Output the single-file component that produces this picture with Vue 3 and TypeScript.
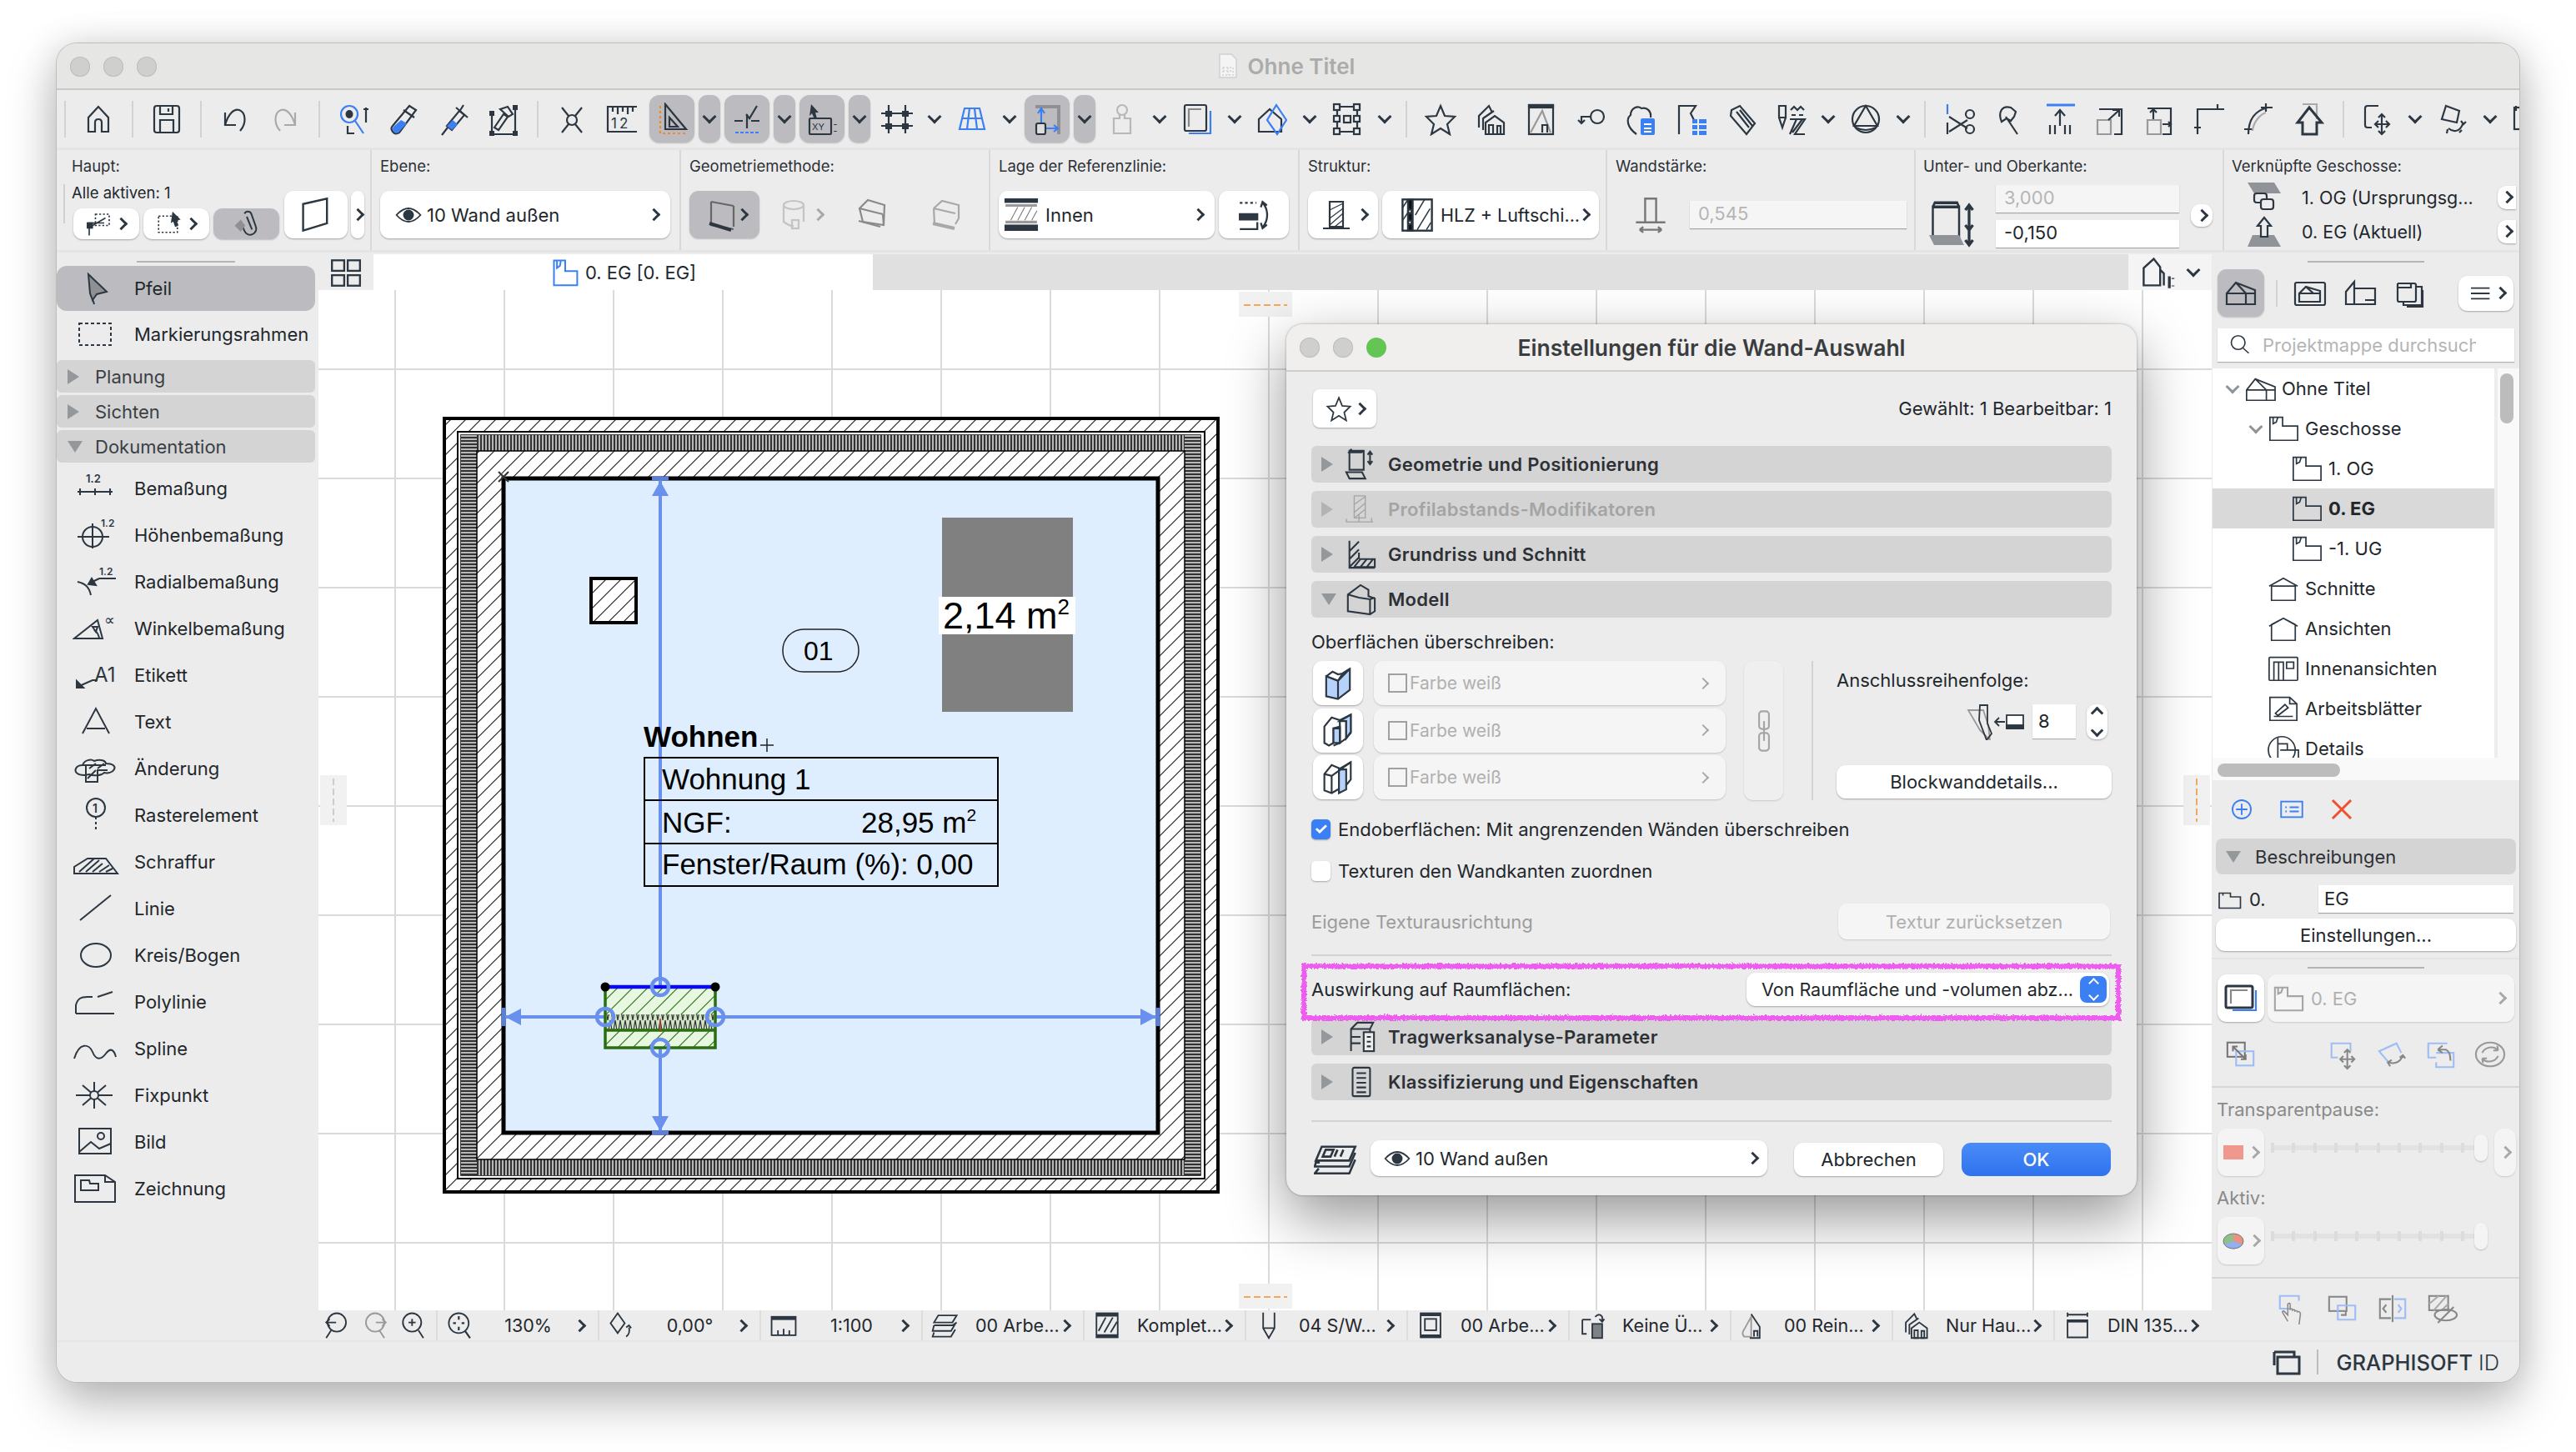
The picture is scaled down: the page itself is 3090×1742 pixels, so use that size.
<script setup lang="ts">
/**
 * ARCHICAD Hauptfenster mit Dialog "Einstellungen für die Wand-Auswahl"
 */
const B = '#3b7ff5'
const T = 'stroke="none" fill="#2c3742" font-family="Inter"'

const I: Record<string, string> = {
  home: '<path d="M20 5 8 18v17h8V24q0-4 4-4t4 4v11h8V18z"/>',
  floppy: '<rect x="5" y="4" width="30" height="32" rx="3"/><path d="M12 4v10h15V4M12 36V21h16v15M22 7v4"/>',
  undo: '<path d="M8 12v15h13"/><path d="M8 27C12 13 19 7 25 9c8 3 9 16 1 25"/>',
  redo: '<path stroke="#aaa" d="M32 12v15H19"/><path stroke="#aaa" d="M32 27C28 13 21 7 15 9c-8 3-9 16-1 25"/>',
  find: `<circle cx="15" cy="14" r="10" stroke="${B}"/><path d="M22 22l10 15" stroke="${B}"/><ellipse cx="15" cy="14" rx="4.5" ry="5" fill="#2c3742" stroke="none"/><path d="M35 6v18M32 8h6M13 28v9h8"/>`,
  dropper: `<path d="M27 4l8 5L15 36q-5 3-8-1t0-7z"/><path d="M17 21l7 4-10 11q-4 2-6-1t0-6z" fill="${B}" stroke="none"/><path d="M20 9l13 9"/>`,
  syringe: `<path d="M27 10l6 5-15 18-6-5z"/><path d="M19 21l6 5-7 7-6-5z" fill="${B}" stroke="none"/><path d="M6 39l7-9M23 6l14 12M32 3l-5 8"/>`,
  hammer: '<path d="M6 38h26M34 6v28M6 14v20"/><g fill="#2c3742" stroke="none"><rect x="3" y="34" width="6" height="6"/><rect x="31" y="34" width="6" height="6"/><rect x="31" y="3" width="6" height="6"/><rect x="3" y="10" width="6" height="6"/></g><path d="M9 30 20 14l5 3-11 16zM16 8l9-3 6 9-5 3z"/>',
  cross: '<path d="M8 6l24 30M32 6 8 36"/><circle cx="20" cy="21" r="6" fill="#ececec"/>',
  ruler: `<path d="M38 5H3v30h35M9 5v6M15 5v9M21 5v6M27 5v9M33 5v6"/><text x="7" y="31" font-size="17" letter-spacing="3" ${T}>12</text>`,
  tri: '<path d="M12 2l25 30H12z"/><path d="M17 18l10 11H17z"/><path d="M6 4v33h31" stroke="#f08a24" stroke-dasharray="3 3"/>',
  snap: `<path d="M5 22h10M25 22h10M20 14v17M19 14l4 5 9-15M9 16"/><path d="M6 36h28" stroke="${B}" stroke-dasharray="4 2"/>`,
  xy: `<path d="M7 2l9 10h-4l2 7-3 1-3-7-3 3z" fill="#2c3742" stroke="none"/><rect x="5" y="19" width="26" height="19" rx="1"/><text x="8" y="33" font-size="11" ${T}>XY</text><path d="M36 26v1M36 34v1" stroke-width="3.5"/>`,
  grid: '<path d="M10 3v34M30 3v34M1 13h38M1 28h38"/><g fill="#2c3742" stroke="none"><rect x="6" y="10" width="8" height="7"/><rect x="26" y="10" width="8" height="7"/><rect x="6" y="25" width="8" height="7"/><rect x="26" y="25" width="8" height="7"/></g>',
  persp: `<g stroke="${B}"><path d="M11 7h18l6 25H5zM8 19h24M17 7l-3 25M23 7l3 25"/></g>`,
  ref: `<path d="M6 5h28v33" stroke="#8f8f94" stroke-width="4"/><g stroke="${B}"><path d="M13 26V8M9 13l4-6 4 6M19 31h14M28 27l5 4-5 4" /></g><rect x="7" y="25" width="11" height="13" rx="2" fill="#ddd"/>`,
  weight: '<g stroke="#b8b8b8"><circle cx="20" cy="9" r="6"/><path d="M17 15v4h-7v18h20V19h-7v-4"/></g>',
  sheets: `<rect x="5" y="3" width="26" height="31" rx="2"/><path d="M10 29V8h15" stroke="#888"/><path d="M36 10v27H10" stroke="${B}"/>`,
  diamond: `<path d="M4 35V20L17 8l14 12v15z"/><path d="M25 3l12 18-11 17-12-17z" stroke="${B}"/>`,
  nodes: '<path d="M8 5h24v30H8z"/><g fill="#ececec"><rect x="4" y="2" width="7" height="7"/><rect x="28" y="2" width="7" height="7"/><rect x="4" y="31" width="7" height="7"/><rect x="28" y="31" width="7" height="7"/><rect x="16" y="16" width="8" height="8"/><rect x="28" y="16" width="7" height="7"/><rect x="4" y="16" width="7" height="7"/></g>',
  star: '<path d="M20 4l5 12 12 1-9 9 3 12-11-7-11 7 3-12-9-9 12-1z"/>',
  houses: '<path d="M6 30V16L18 4l4 8M11 33V19l13-9"/><path d="M14 38V24l11-8 11 8v14z"/><path d="M18 27h5v11h-5zM28 28h4v10h-4z"/>',
  elev: '<rect x="6" y="3" width="29" height="35"/><rect x="6" y="3" width="29" height="3" fill="#2c3742"/><path d="M8 36 22 10l10 26" stroke="#999"/><path d="M22 36v-9h6v9"/>',
  key: '<circle cx="28" cy="17" r="8"/><path d="M20 17H9v8M5 21l4 4 4-4"/>',
  cloud: `<path d="M15 38C4 30 2 20 8 15c0-8 8-12 13-8 7-2 12 4 11 11"/><rect x="20" y="19" width="17" height="20" rx="2" fill="${B}" stroke="none"/><path d="M24 26h9M24 31h9M24 35h9" stroke="#fff"/>`,
  fs: `<path d="M6 38V4h20l-6 9 4 8"/><g fill="${B}" stroke="none"><rect x="22" y="20" width="6" height="5"/><rect x="30" y="20" width="9" height="5"/><rect x="22" y="27" width="6" height="5"/><rect x="30" y="27" width="9" height="5"/><rect x="22" y="34" width="6" height="5"/><rect x="30" y="34" width="9" height="5"/></g>`,
  tag: '<path d="M9 9l10-5 18 21-10 13L8 16zM15 11l15 19M19 9l15 19M6 6"/>',
  pens: '<path d="M6 4h8v14l-4 12-4-12zM6 18h8"/><path d="M19 20h18l-12 18h12M22 36l12-16M19 38l8-18" /><path d="M20 9l4-4 4 4 4-4 4 4M21 15h5M30 15h5"/>',
  sphere: '<circle cx="20" cy="20" r="16"/><path d="M20 4l14 24H6zM8 30q12 6 24 0"/>',
  scissors: `<path d="M6 2v12" stroke="${B}"/><path d="M6 24v14M8 17l22 14M8 35l22-14"/><circle cx="33" cy="14" r="5"/><circle cx="33" cy="32" r="5"/>`,
  axe: '<path d="M16 17l14 21M22 6c-10-3-16 5-11 17l6-4 5 3 4-5 2-6z"/>',
  ext: `<path d="M5 3h34" stroke="${B}" stroke-width="3"/><path d="M21 9v19M15 16l6-7 6 7M9 27v11M15 27v11M27 27v11M33 27v11"/>`,
  resize: '<path d="M8 8h27v30H26"/><path d="M6 21h16v17H6z" stroke="#999"/><path d="M19 21 31 10M24 9h8v8"/>',
  resize2: '<path d="M6 7h28v31H24"/><path d="M6 21h16v17H6z" stroke="#999"/><path d="M13 20V8M9 12l4-4 4 4M24 26h10M31 23l3 3-3 3"/>',
  corner: '<path d="M6 38V8h32M6 30h-4h8M30 2v6"/>',
  arc: '<path d="M7 38C7 22 14 10 30 6M28 1v10M22 6h14M2 32h10" /><path d="M12 34C13 24 20 15 28 12" stroke="#aaa"/>',
  house3: '<path d="M12 2h17v18" stroke="#aaa"/><path d="M20 6 6 24h6v14h17V24h6z" stroke-width="3"/>',
  move: '<path d="M21 4H8a3 3 0 0 0-3 3v20a3 3 0 0 0 3 3h5"/><path d="M25 14v24M17 26h17M21 18l4-4 4 4M21 34l4 4 4-4M21 22l-4 4 4 4M30 22l4 4-4 4"/>',
  rotate: '<path d="M12 4l16 6-3 14-18-4z"/><path d="M15 31c6 5 14 4 17-5M30 22l3 4 3-3M14 32l-1 5M28 36l3-3" />',
  opt: '<path d="M6 4v6M10 12"/><rect x="4" y="6" width="8" height="26"/>',
  gridView: '<rect x="4" y="6" width="14" height="12"/><rect x="22" y="6" width="14" height="12"/><rect x="4" y="23" width="14" height="12"/><rect x="22" y="23" width="14" height="12"/>',
  navGear: '<path d="M4 34V15L15 5l7 9v20zM22 17l4 4v13"/><path d="M32 24v13M36 26v1M36 34v1" stroke-width="3"/>',
  floorBlue: `<g stroke="${B}"><path d="M5 4v33h31V18H20V4zM9 5v9l4-3 1-6"/></g>`,
  floor: '<path d="M3 6v29h35V17H19V6zM7 6v8l4-2 2-6"/>',
  eye: '<path d="M2 20q18-20 36 0-18 20-36 0z"/><circle cx="20" cy="20" r="7" fill="#2c3742"/>',
  wallFree: '<path d="M6 8l26-6v27L6 37zM6 36" />',
  wallStraight: '<path d="M10 4l27 5M10 4v28l27 5M37 9v25" stroke="#666"/><path d="M8 30l26 8" stroke-width="4"/>',
  wallRound: '<g stroke="#c4c4c4"><ellipse cx="20" cy="8" rx="12" ry="5"/><path d="M8 8v20q8 6 12 5M32 8v20"/><rect x="18" y="26" width="8" height="10"/></g>',
  wallTrap: '<g stroke="#8a8a8a"><path d="M4 12 14 2l20 6-1 24L8 28zM4 12l28 7M32 19l1 13"/><path d="M3 27l26 7"/></g>',
  wallTrap2: '<g stroke="#a8a8a8"><path d="M6 12 16 3l20 5v16l-4 7M6 12l26 6M6 12l1 18"/><path d="M5 30l26 6" stroke-width="4"/></g>',
  refSide: '<rect x="2" y="2" width="36" height="3" fill="#2c3742"/><rect x="2" y="32" width="36" height="5" fill="#2c3742"/><path d="M2 9h36M2 28h36" stroke="#999" stroke-width="3"/><path d="M8 26l8-15M16 26l8-15M24 26l8-15M32 26l6-11" stroke-width="1" stroke="#777"/>',
  flip: '<path d="M4 6h19" stroke-dasharray="3 3"/><path d="M4 19h20v6H4z" fill="#2c3742"/><path d="M4 36h20v-8"/><path d="M30 6c7 8 7 20 0 28M28 11l2-6 5 4M28 29l2 6 5-4"/>',
  struct1: '<path d="M12 4h16v30H12zM4 36h32" /><path d="M12 14l16-8M12 24l16-12M12 32l16-14M18 34l10-8" stroke-width="1.2"/>',
  struct2: '<rect x="4" y="3" width="32" height="34" fill="#fff"/><rect x="10" y="3" width="5" height="34" fill="#111"/><path d="M4 12l6-9M4 26l6-9M18 20l10-17M20 36l14-23M30 36l5-8" stroke-width="1.4"/><circle cx="12" cy="16" r="2" fill="#fff"/><circle cx="12" cy="28" r="2" fill="#fff"/>',
  thickness: '<g stroke="#777"><path d="M14 2h12v26H14zM4 28h32M8 36h24M8 36l4-3M8 36l4 3M32 36l-4-3M32 36l-4 3"/></g>',
  heights: '<path d="M4 5h28v22H4zM4 5l2-3h24l2 3" transform="translate(2 2) scale(.75 1.1)"/><path d="M34 6v20M31 10l3-4 3 4M31 22l3 4 3-4M34 26v12M31 34l3 4 3-4"/><path d="M2 30h24l4 8H6z" fill="#909498" stroke="none"/>',
  linkUp: '<path d="M2 2h32l8 13H10z" fill="#909498" stroke="none"/><rect x="10" y="15" width="15" height="11" rx="3" fill="#ececec"/><rect x="18" y="22" width="15" height="12" rx="3" fill="#ececec"/>',
  homeDown: '<path d="M8 24h26l8 14H2z" fill="#909498" stroke="none" /><path d="M22 3l-8 10h4v13h8V13h4z" fill="#ececec"/>',
}

const P: Record<string, string> = {
  dim: `<path d="M6 26h42M9 22v8M45 22v8M27 22v8"/><text x="16" y="15" font-size="13" font-weight="600" ${T}>1.2</text>`,
  lvl: `<circle cx="24" cy="24" r="12"/><path d="M24 8v30M6 24h38"/><text x="34" y="12" font-size="12" font-weight="600" ${T}>1.2</text>`,
  rad: `<path d="M6 22c9 2 14 6 16 16M20 24l12-6M32 18h20"/><path d="M28 26l-9-1 4-7z" fill="#2c3742"/><text x="32" y="14" font-size="12" font-weight="600" ${T}>1.2</text>`,
  ang: `<path d="M2 34h34L30 12zM26 24q5 3 6 10"/><path d="M24 20l4 6 2-6zM30 34h6"/><text x="38" y="18" font-size="18" ${T}>∝</text>`,
  tag: `<path d="M6 36l18-8h6"/><path d="M5 37v-8l8 8z" fill="#2c3742"/><text x="26" y="30" font-size="24" ${T}>A1</text>`,
  txt: '<path d="M12 36 28 6l16 30M17 30h22"/>',
  cloud: '<path d="M14 30c-8 0-12-4-10-8s6-4 8-4c2-6 10-8 14-5 8-3 14 0 14 3 8 0 12 3 10 7s-8 5-12 4c-4 4-14 4-18 2z"/><path d="M12 18h28M16 18v20h14V24h12M20 22l8-6M30 22l8-6M18 34l10-10" />',
  rast: '<circle cx="28" cy="13" r="11"/><text x="24" y="19" font-size="14" font-weight="600" stroke="none" fill="#2c3742" font-family="Inter">1</text><path d="M28 24v16" stroke-dasharray="3 3"/>',
  hatch: '<path d="M2 36V28L18 18h22l14 18zM8 34l18-16M16 34l16-14M24 34l12-10M32 34l12-8M40 34l8-4"/>',
  line: '<path d="M9 36 46 6"/>',
  circle: '<ellipse cx="28" cy="22" rx="18" ry="14"/>',
  poly: '<path d="M4 36V26c2-8 6-10 14-10h6M30 16l18-6M4 36h46"/>',
  spline: '<path d="M2 34c6-20 18-18 22-8s10 10 16 2 10-4 12 4"/>',
  fix: '<path d="M4 22h44M26 6v32M12 10l28 24M40 10 12 34"/><circle cx="26" cy="22" r="5" fill="#ececec"/>',
  img: '<rect x="8" y="6" width="38" height="30"/><circle cx="34" cy="15" r="4"/><path d="M8 34l14-12 10 8 14-6"/>',
  draw: '<path d="M3 6h36l12 8v24H3z" /><path d="M39 6v8h12M10 12h10l1 4h10v8H10z"/>',
  arrow: '<path d="M19 5 41 26 29 29 24 36 21 28z" fill="#8e9094"/><path d="M24 35l2 6"/>',
}

const S: Record<string, string> = {
  geo: '<path d="M6 3h18v24H6zM6 3l3-2M24 3l-3 2H4M32 4v16M29 8l3-4 3 4M29 16l3 4 3-4"/><path d="M2 30h20l4 8H6z"/>',
  prof: '<path d="M12 3h14v28H12zM2 36h34M2 32v4M34 31v5M12 14l14-10M12 24l14-12M12 31l14-11M18 36V26" stroke-width="1.4"/>',
  plan: '<path d="M6 3v34h32M6 16l12-12M6 26l12-12M6 36l12-12M18 26v-8M12 36l8-10h18v10H12M20 36l8-10M28 36l8-10"/>',
  model: '<path d="M4 14 20 2l10 6v8l8 3v16l-6 4-28-4zM4 14l14 4 14 2 6-2M32 20v19"/>',
  struct: '<path d="M8 38V10L16 2h20l-4 8H8M32 10v6M8 20h12M8 28h12"/><rect x="24" y="14" width="13" height="24" fill="#ececec"/><path d="M28 20h5M28 26h5M28 32h5"/>',
  cls: '<rect x="10" y="2" width="22" height="36" rx="2"/><path d="M15 9h12M15 15h12M15 21h12M15 27h12M15 33h12"/>',
}

const tools = [
  { sep: 1 }, { i: 'home' }, { sep: 1 }, { i: 'floppy' }, { sep: 1 }, { i: 'undo' }, { i: 'redo' }, { sep: 1 },
  { i: 'find' }, { i: 'dropper' }, { i: 'syringe' }, { i: 'hammer' }, { sep: 1 }, { i: 'cross' }, { i: 'ruler' },
  { i: 'tri', on: 1, ch: 1 }, { i: 'snap', on: 1, ch: 1 }, { i: 'xy', on: 1, ch: 1 }, { i: 'grid', ch: 1 },
  { i: 'persp', ch: 1 }, { i: 'ref', on: 1, ch: 1 }, { i: 'weight', ch: 1 }, { i: 'sheets', ch: 1 },
  { i: 'diamond', ch: 1 }, { i: 'nodes', ch: 1 }, { sep: 1 }, { i: 'star' }, { i: 'houses' }, { i: 'elev' },
  { i: 'key' }, { i: 'cloud' }, { i: 'fs' }, { i: 'tag' }, { i: 'pens', ch: 1 }, { i: 'sphere', ch: 1 }, { sep: 1 },
  { i: 'scissors' }, { i: 'axe' }, { i: 'ext' }, { i: 'resize' }, { i: 'resize2' }, { i: 'corner' }, { i: 'arc' },
  { i: 'house3' }, { sep: 1 }, { i: 'move', ch: 1 }, { i: 'rotate', ch: 1 }, { i: 'opt' },
]

const palette = [
  { p: 'dim', t: 'Bemaßung' }, { p: 'lvl', t: 'Höhenbemaßung' }, { p: 'rad', t: 'Radialbemaßung' },
  { p: 'ang', t: 'Winkelbemaßung' }, { p: 'tag', t: 'Etikett' }, { p: 'txt', t: 'Text' }, { p: 'cloud', t: 'Änderung' },
  { p: 'rast', t: 'Rasterelement' }, { p: 'hatch', t: 'Schraffur' }, { p: 'line', t: 'Linie' },
  { p: 'circle', t: 'Kreis/Bogen' }, { p: 'poly', t: 'Polylinie' }, { p: 'spline', t: 'Spline' },
  { p: 'fix', t: 'Fixpunkt' }, { p: 'img', t: 'Bild' }, { p: 'draw', t: 'Zeichnung' },
]

const status = [
  { i: 'fit', t: '130%', c: 1 }, { i: 'rotS', t: '0,00°', c: 1 }, { i: 'scale', t: '1:100', c: 1 },
  { i: 'layers', t: '00 Arbe...' }, { i: 'hatchS', t: 'Komplet...' }, { i: 'pen', t: '04 S/W...' },
  { i: 'frame', t: '00 Arbe...' }, { i: 'over', t: 'Keine Ü...' }, { i: 'renov', t: '00 Rein...' },
  { i: 'houses', t: 'Nur Hau...' }, { i: 'din', t: 'DIN 135...' },
]

const SI: Record<string, string> = {
  back: '<circle cx="20" cy="16" r="13"/><path d="M5 16h14M10 11l-5 5 5 5M12 27 5 38"/>',
  fwd: '<g stroke="#999"><circle cx="20" cy="16" r="13"/><path d="M21 16h14M30 11l5 5-5 5M26 27l7 11"/></g>',
  plus: '<circle cx="18" cy="16" r="13"/><path d="M18 11v10M13 16h10M27 27l7 11"/>',
  fit: '<circle cx="18" cy="17" r="14"/><path d="M18 7v5M18 22v5M10 17h4M22 17h4M27 28l7 10" stroke-width="2.6"/>',
  rotS: '<path d="M14 3l10 14-10 14L4 17zM26 36q6-4 4-13M26 23l4-3 3 4"/>',
  scale: '<rect x="3" y="8" width="34" height="26"/><path d="M3 10h34" stroke-width="5"/><path d="M12 34v-7M20 34v-9M28 34v-7"/>',
  layers: '<path d="M10 6h26l-6 10H4zM4 20h26l6-4M4 20l-2 8h26l6-10M4 30l-2 6h26l6-10"/>',
  hatchS: '<rect x="5" y="3" width="30" height="34"/><path d="M5 5h30M5 35h30" stroke-width="5"/><path d="M8 28 18 9M16 30 28 9M25 30l9-15"/>',
  pen: '<path d="M12 2v22l8 14 8-14V2M12 24h16"/>',
  frame: '<rect x="6" y="3" width="28" height="34"/><rect x="12" y="11" width="16" height="16"/><path d="M6 5h28M6 35h28" stroke-width="4"/>',
  over: '<path d="M6 12v20h6M24 8q6-6 10 0v6M30 11l4 4 3-4"/><rect x="20" y="18" width="14" height="20" fill="#7e8287"/><path d="M6 12h12"/>',
  renov: '<path d="M6 36q-4-4 0-10l10-18v28z" stroke="#999"/><path d="M16 4l12 18v16H14"/><path d="M20 36v-8h5v8"/>',
  din: '<path d="M6 5h28M6 2v6M34 2v6"/><path d="M6 13h28v24H6z"/><path d="M6 14h28" stroke-width="4"/>',
}

const tree = [
  { t: 'Ohne Titel', lv: 0, tw: 1, i: 'pHouse' }, { t: 'Geschosse', lv: 1, tw: 1, i: 'floor' },
  { t: '1. OG', lv: 2, i: 'floor' }, { t: '0. EG', lv: 2, i: 'floor', sel: 1 }, { t: '-1. UG', lv: 2, i: 'floor' },
  { t: 'Schnitte', lv: 1, i: 'pCut' }, { t: 'Ansichten', lv: 1, i: 'pView' }, { t: 'Innenansichten', lv: 1, i: 'pIn' },
  { t: 'Arbeitsblätter', lv: 1, i: 'pSheet' }, { t: 'Details', lv: 1, i: 'pDetail' },
]

const TI: Record<string, string> = {
  pHouse: '<path d="M3 35V22L14 8l25 10v17zM14 8l14 14H3M28 22h11M28 22v13"/>',
  floor: I.floor,
  pCut: '<path d="M5 35V17h30v18zM2 17 20 7l18 10"/>',
  pView: '<path d="M5 35V15L20 7l15 8v20zM2 17 20 7l18 10"/>',
  pIn: '<rect x="2" y="6" width="36" height="29" rx="1"/><path d="M8 35V12h12v23M14 12v23M24 12h9v8h-9z"/>',
  pSheet: '<path d="M3 6h25l9 8v21H3zM28 6v8h9M8 30h24M10 26l12-11 4 4-13 10z"/>',
  pDetail: '<circle cx="18" cy="22" r="17"/><path d="M13 6v32M13 14h12v8h14v12M16 22h10"/>',
  tBtn1: '<path d="M3 33V20L14 7l23 9v17zM14 7l12 13H3M26 20h11M26 20v13"/>',
  tBtn2: '<rect x="2" y="7" width="36" height="27" rx="2"/><path d="M7 30V20l8-8 17 5v13zM15 12l9 8H7M24 20h8"/>',
  tBtn3: '<path d="M3 33V18L13 6v27zM13 14h25v19H3M26 28h12"/>',
  tBtn4: '<path d="M5 8h20a2 2 0 0 1 2 2v18a2 2 0 0 1-2 2H7a2 2 0 0 1-2-2V8M5 13h16v-4M28 12h6v22H12v-4M35 16v20H16"/>',
  tMenu: '<path d="M5 12h28M5 20h28M5 28h28"/>',
  search: '<circle cx="17" cy="16" r="11"/><path d="M25 25l9 8"/>',
  add: `<circle cx="20" cy="20" r="13" stroke="${B}"/><path d="M20 12v16M12 20h16" stroke="${B}"/>`,
  list: `<rect x="5" y="9" width="30" height="22" stroke="${B}"/><path d="M11 17h2M11 23h2M17 17h13M17 23h13" stroke="${B}"/>`,
  del: '<path d="M7 7l26 26M33 7 7 33" stroke="#f0502e" stroke-width="3.5"/>',
  plain: '<path d="M4 10v24h34V16H22v-6z"/><path d="M10 10v4"/>',
  layerBtn: `<rect x="2" y="5" width="32" height="26" rx="2" stroke-width="3"/><path d="M38 10v24H10" stroke="${B}"/><path d="M8 26V10h20" stroke="#888"/>`,
  a: `<rect x="3" y="5" width="22" height="18" stroke="#777"/><rect x="14" y="16" width="22" height="18" stroke="#9ebcf5"/><path d="M10 10l16 16M10 16v-6h6M26 20v6h-6" stroke="#777"/>`,
  b: `<path d="M14 24H6V6h24v10" stroke="#9ebcf5"/><path d="M26 14v24M17 26h18M22 18l4-4 4 4M22 34l4 4 4-4M21 22l-4 4 4 4M31 22l4 4-4 4" stroke="#888"/>`,
  c: `<path d="M16 30 4 16 26 6l6 12" stroke="#9ebcf5"/><path d="M16 30q12 4 18-8M30 24l4-3 3 4M20 27l-5 3 3 5" stroke="#888"/>`,
  d: `<path d="M14 24H4V6h24M14 18h22v18H14v-6" stroke="#9ebcf5"/><path d="M16 14l6-5M16 14l6 4M16 14h10q6 2 6 14" stroke="#888"/>`,
  e: '<g stroke="#999"><ellipse cx="20" cy="20" rx="18" ry="15"/><path d="M10 18c3-7 14-10 20-3M30 15l-1-6M30 15l-6 0M30 22c-3 7-14 10-20 3M10 25l1 6M10 25l6 0"/></g>',
  f: `<path d="M18 20H4V4h24v6" stroke="#9ebcf5"/><path d="M14 36 8 26q-2-3 1-3l5 5V14q3-2 3 1v6q3-2 3 1 3-2 3 1 3-1 3 1 3-1 4 2l-2 16" stroke="#888" stroke-width="1.6"/>`,
  g: `<rect x="3" y="5" width="22" height="18" stroke="#888"/><path d="M14 16h22v18H14z" stroke="#9ebcf5"/><path d="M24 23v5h-6" stroke="#888"/>`,
  h: `<path d="M18 8H4v24h14" stroke="#888"/><path d="M22 8h14v24H22" stroke="#9ebcf5"/><path d="M20 3v34" stroke="#888"/><path d="M12 15l-4 5 4 5" stroke="#888"/><path d="M27 15l4 5-4 5" stroke="#9ebcf5"/>`,
  j: `<rect x="3" y="4" width="24" height="18" stroke="#888"/><path d="M3 14l12-10M9 22l16-18M19 22l8-8" stroke="#aaa"/><ellipse cx="24" cy="28" rx="14" ry="7" stroke="#888"/><path d="M14 38l20-20" stroke="#888"/>`,
  win: '<path d="M6 8h24v6M6 8v16" stroke-width="3"/><rect x="10" y="14" width="26" height="20" stroke-width="3"/>',
}

// Deckfläche, Mitte und Kante der Wand, jeweils die zugewiesene Fläche in Blau
const surfaces = [
  '<path d="M7 14v22l13 3 13-10V6l-8 5-5 8z" fill="#b6d2fb"/><path d="M7 14l7-5 6 3 5-1 8-5M7 14l13 5 13-13M20 19v20"/>',
  '<path d="M5 18v18l5 3 5-3V20l7-2v18l7-5 5-6V5L22 11 13 8z"/><path d="M15 20h7v16h-7z" fill="#b6d2fb"/><path d="M22 18v18l-7 3M22 11v7M29 7v24" fill="none"/><path d="M22 12l12-7v19l-5 7V12z" fill="#b6d2fb"/>',
  '<path d="M5 18v18l8 3 17-10 4-5V5L22 12 13 8z"/><path d="M21 13h8v22l-8 4z" fill="#b6d2fb"/><path d="M13 20v19M5 18l8 2 21-15"/>',
]
const sliderTicks = Array.from({ length: 10 })
</script>

<template>
  <div class="win">
    <header class="titlebar">
      <div class="lights"><i /><i /><i /></div>
      <div class="wtitle">
        <svg class="doc" viewBox="0 0 24 30"><path d="M2 1h14l6 6v22H2z" /><path d="M6 17h12v9H6zM12 17v9M6 21h12" stroke-dasharray="2 2" /></svg>
        Ohne Titel
      </div>
    </header>

    <div class="toolbar">
      <template v-for="(t, k) in tools" :key="k">
        <span v-if="t.sep" class="tsep" />
        <template v-else>
          <span class="tcell" :class="{ on: t.on }"><svg class="ico" viewBox="0 0 40 40" v-html="I[t.i as string]" /></span>
          <span v-if="t.ch" class="tdrop" :class="{ on: t.on }"><b class="drop" /></span>
        </template>
      </template>
    </div>

    <div class="infobox">
      <section class="panel p0">
        <div class="plabel first">Haupt:</div>
        <div class="prow top">
          <span class="hsep" />
          <div class="hcol">
            <div class="small">Alle aktiven: 1</div>
            <div class="hbtns">
              <button class="wbtn b79"><svg class="ico s30" viewBox="0 0 40 40"><path d="M4 38V18h24M6 24l24-14" /><rect x="1" y="18" width="8" height="8" fill="#2c3742" /><rect x="14" y="4" width="22" height="18" stroke-dasharray="3 3" /></svg><b class="chev" /></button>
              <button class="wbtn b79"><svg class="ico s30" viewBox="0 0 40 40"><rect x="3" y="7" width="30" height="26" stroke-dasharray="3 3" /><path d="M26 2l10 10-5 1 2 9-3 1-3-9-3 2z" fill="#2c3742" /></svg><b class="chev" /></button>
              <button class="gbtn"><svg class="ico s36" viewBox="0 0 40 40"><path d="M17 6a5 5 0 0 1 9 0l6 17a8 8 0 0 1-15 6l-4-9M20 10l7 17" /><path d="M4 22l8-8 6 8-6 8z" fill="#909094" stroke="none" /></svg></button>
            </div>
          </div>
          <button class="wbtn b76"><svg class="ico s44" viewBox="0 0 40 40" v-html="I.wallFree" /></button>
          <button class="wbtn nub"><b class="chev" /></button>
        </div>
      </section>

      <section class="panel p1">
        <div class="plabel">Ebene:</div>
        <div class="prow">
          <button class="wbtn field w348">
            <svg class="ico s32" viewBox="0 0 40 40" v-html="I.eye" /><span class="ftext">10 Wand außen</span><b class="chev" />
          </button>
        </div>
      </section>

      <section class="panel p2">
        <div class="plabel">Geometriemethode:</div>
        <div class="prow">
          <button class="gbtn g84"><svg class="ico s40" viewBox="0 0 40 40" v-html="I.wallStraight" /><b class="chev" /></button>
          <span class="plain m1"><svg class="ico s40" viewBox="0 0 40 40" v-html="I.wallRound" /><b class="chev lite" /></span>
          <span class="plain g3"><svg class="ico s40" viewBox="0 0 40 40" v-html="I.wallTrap" /></span>
          <span class="plain g4"><svg class="ico s40" viewBox="0 0 40 40" v-html="I.wallTrap2" /></span>
        </div>
      </section>

      <section class="panel p3">
        <div class="plabel">Lage der Referenzlinie:</div>
        <div class="prow">
          <button class="wbtn field w259 tight">
            <svg class="ico s42" viewBox="0 0 40 40" v-html="I.refSide" /><span class="ftext">Innen</span><b class="chev" />
          </button>
          <button class="wbtn w84"><svg class="ico s42" viewBox="0 0 40 40" v-html="I.flip" /></button>
        </div>
      </section>

      <section class="panel p4">
        <div class="plabel">Struktur:</div>
        <div class="prow">
          <button class="wbtn w84"><svg class="ico s40" viewBox="0 0 40 40" v-html="I.struct1" /><b class="chev" /></button>
          <button class="wbtn field w260 tight2">
            <svg class="ico s44" viewBox="0 0 40 40" v-html="I.struct2" /><span class="ftext">HLZ + Luftschi...</span><b class="chev" />
          </button>
        </div>
      </section>

      <section class="panel p5">
        <div class="plabel">Wandstärke:</div>
        <div class="prow">
          <svg class="ico s44 thick" viewBox="0 0 40 40" v-html="I.thickness" />
          <div class="tinput off w260i">0,545</div>
        </div>
      </section>

      <section class="panel p6">
        <div class="plabel">Unter- und Oberkante:</div>
        <div class="prow hk">
          <svg class="ico s60" viewBox="0 0 40 40" v-html="I.heights" />
          <div class="hinputs">
            <div class="tinput off">3,000</div>
            <div class="tinput">-0,150</div>
          </div>
          <button class="wbtn nub2"><b class="chev" /></button>
        </div>
      </section>

      <section class="panel p7">
        <div class="plabel">Verknüpfte Geschosse:</div>
        <div class="vrow">
          <svg class="ico s44" viewBox="0 0 44 40" v-html="I.linkUp" /><span class="vtext">1. OG (Ursprungsg...</span>
          <button class="wbtn nub3"><b class="chev" /></button>
        </div>
        <div class="vrow">
          <svg class="ico s44" viewBox="0 0 44 40" v-html="I.homeDown" /><span class="vtext">0. EG (Aktuell)</span>
          <button class="wbtn nub3"><b class="chev" /></button>
        </div>
      </section>
    </div>

    <main class="main">
      <aside class="palette">
        <div class="handle" />
        <div class="prow2 active"><svg class="pi" viewBox="0 0 56 44" v-html="P.arrow" /><span>Pfeil</span></div>
        <div class="prow2 marq"><svg class="pi" viewBox="0 0 56 44"><rect x="8" y="9" width="38" height="26" stroke-dasharray="4 3" /></svg><span>Markierungsrahmen</span></div>
        <div class="psec"><i class="tri r" />Planung</div>
        <div class="psec"><i class="tri r" />Sichten</div>
        <div class="psec"><i class="tri d" />Dokumentation</div>
        <div v-for="p in palette" :key="p.t" class="prow2">
          <svg class="pi" viewBox="0 0 56 44" v-html="P[p.p]" /><span>{{ p.t }}</span>
        </div>
      </aside>

      <div class="center">
        <div class="tabs">
          <span class="tabgrid"><svg class="ico s42" viewBox="0 0 40 40" v-html="I.gridView" /></span>
          <div class="tab"><svg class="ico s36" viewBox="0 0 40 40" v-html="I.floorBlue" />0. EG [0. EG]</div>
          <div class="tabfill" />
          <div class="tabnav"><svg class="ico s44" viewBox="0 0 40 40" v-html="I.navGear" /><b class="drop" /></div>
        </div>

        <div class="canvas">
          <svg class="plan" viewBox="382 348 2271 1224">
            <defs>
              <pattern id="hatch" width="18" height="18" patternUnits="userSpaceOnUse"><path d="M0 18 18 0M-4 4 4-4M14 22l8-8" stroke="#222" stroke-width="1.2" /></pattern>
              <pattern id="hatchG" width="18" height="18" patternUnits="userSpaceOnUse"><path d="M0 18 18 0M-4 4 4-4M14 22l8-8" stroke="#2f6f1c" stroke-width="1.2" /></pattern>
              <pattern id="insH" width="4" height="19" patternUnits="userSpaceOnUse"><rect width="2" height="19" fill="#333" /><rect x="2" width="2" height="19" fill="#b8b8b8" /></pattern>
              <pattern id="insV" width="19" height="4" patternUnits="userSpaceOnUse"><rect width="19" height="2" fill="#333" /><rect y="2" width="19" height="2" fill="#b8b8b8" /></pattern>
              <pattern id="zig" width="6" height="18" patternUnits="userSpaceOnUse"><path d="M0 0l3 18 3-18" stroke="#333" stroke-width="1.2" fill="none" /></pattern>
              <filter id="rough"><feTurbulence baseFrequency=".35" numOctaves="2" /><feDisplacementMap in="SourceGraphic" scale="5" /></filter>
            </defs>

            <rect x="533" y="502" width="928" height="928" fill="#fff" />
            <rect x="533" y="502" width="928" height="928" fill="url(#hatch)" stroke="#000" stroke-width="4" />
            <rect x="549" y="518" width="896" height="896" fill="#fff" stroke="#000" stroke-width="2" />
            <rect x="553" y="522" width="887" height="888" fill="#fff" stroke="#000" stroke-width="1.5" />
            <rect x="553" y="522" width="887" height="19" fill="url(#insH)" />
            <rect x="553" y="1391" width="887" height="19" fill="url(#insH)" />
            <rect x="553" y="522" width="19" height="888" fill="url(#insV)" />
            <rect x="1421" y="522" width="19" height="888" fill="url(#insV)" />
            <rect x="572" y="541" width="849" height="850" fill="url(#hatch)" stroke="#000" stroke-width="1.5" />
            <rect x="604" y="574" width="785" height="785" fill="#dfeeff" stroke="#000" stroke-width="5" />

            <rect x="709" y="694" width="54" height="53" fill="#fff" />
            <rect x="709" y="694" width="54" height="53" fill="url(#hatch)" stroke="#000" stroke-width="4" />
            <rect x="1130" y="621" width="157" height="233" fill="#808080" />
            <rect x="1126" y="716" width="164" height="45" fill="#fff" />
            <text class="ar" x="1131" y="754" font-size="45">2,14 m<tspan font-size="26" dy="-17">2</tspan></text>
            <rect x="939" y="755" width="91" height="51" rx="25" fill="none" stroke="#222" stroke-width="1.5" />
            <text class="ar" x="964" y="792" font-size="32">01</text>

            <path d="M792 574v785M604 1220h785" stroke="#6a90ee" stroke-width="4" />
            <path d="M782 574h20M782 1359h20M604 1209v22M1389 1209v22" stroke="#5b7fd8" stroke-width="5" />
            <path d="M792 577l-10 18h20zM792 1357l-10-18h20zM606 1220l19-10v20zM1387 1220l-19-10v20z" fill="#6a90ee" />

            <text class="ar bold" x="772" y="896" font-size="35">Wohnen</text>
            <path d="M912 894h16M920 886v16" stroke="#222" stroke-width="1.5" />
            <g fill="none" stroke="#000" stroke-width="2"><rect x="773" y="909" width="424" height="154" /><path d="M773 960h424M773 1012h424" /></g>
            <text class="ar" x="794" y="947" font-size="35">Wohnung 1</text>
            <text class="ar" x="794" y="999" font-size="35">NGF:</text>
            <text class="ar" x="1033" y="999" font-size="35">28,95 m<tspan font-size="21" dy="-14">2</tspan></text>
            <text class="ar" x="794" y="1049" font-size="35">Fenster/Raum (%): 0,00</text>

            <rect x="726" y="1184" width="132" height="73" fill="#e8f8e0" />
            <rect x="726" y="1184" width="132" height="73" fill="url(#hatchG)" />
            <rect x="728" y="1217" width="128" height="18" fill="#cfe4c4" />
            <rect x="728" y="1217" width="128" height="18" fill="url(#zig)" />
            <path d="M726 1184v73h132v-73M726 1236h132" fill="none" stroke="#2a6e12" stroke-width="3.5" />
            <path d="M726 1184h132" stroke="#0a0aee" stroke-width="4.5" />
            <circle cx="726" cy="1184" r="5.5" /><circle cx="858" cy="1184" r="5.5" />
            <path d="M792 1222v16" stroke="#c0392b" stroke-width="1.5" />
            <g fill="none" stroke="#6a90ee" stroke-width="4.5">
              <circle cx="792" cy="1184" r="10" /><circle cx="726" cy="1220" r="10" /><circle cx="858" cy="1220" r="10" /><circle cx="792" cy="1257" r="10" />
            </g>
            <path d="M598 566l12 12M610 566l-12 12" stroke="#333" stroke-width="2" />
          </svg>

          <div class="edge e-top"><i /></div>
          <div class="edge e-left"><i /></div>
          <div class="edge e-right"><i /></div>
          <div class="edge e-bottom"><i /></div>

          <div class="dlg">
            <div class="dlg-title">
              <div class="lights small2"><i /><i /><i class="green" /></div>
              Einstellungen für die Wand-Auswahl
            </div>
            <div class="dlg-body">
              <div class="favrow">
                <button class="wbtn fav"><svg class="ico s32" viewBox="0 0 40 40" v-html="I.star" /><b class="chev" /></button>
                <span>Gewählt: 1 Bearbeitbar: 1</span>
              </div>

              <div class="bar first"><i class="tri r" /><svg class="ico s38" viewBox="0 0 40 40" v-html="S.geo" />Geometrie und Positionierung</div>
              <div class="bar off"><i class="tri r" /><svg class="ico s38" viewBox="0 0 40 40" v-html="S.prof" />Profilabstands-Modifikatoren</div>
              <div class="bar"><i class="tri r" /><svg class="ico s38" viewBox="0 0 40 40" v-html="S.plan" />Grundriss und Schnitt</div>
              <div class="bar"><i class="tri d" /><svg class="ico s38" viewBox="0 0 40 40" v-html="S.model" />Modell</div>

              <div class="lbl">Oberflächen überschreiben:</div>
              <div class="surf">
                <div class="surf-rows">
                  <div v-for="(s, k) in surfaces" :key="k" class="srow">
                    <button class="wbtn sbtn"><svg class="ico s44" viewBox="0 0 40 44" v-html="s" /></button>
                    <div class="sfield"><i class="swatch" />Farbe weiß<b class="chev lite" /></div>
                  </div>
                </div>
                <div class="slink"><svg class="ico chain dimI" viewBox="0 0 20 44"><rect x="5" y="2" width="10" height="18" rx="3" /><rect x="5" y="24" width="10" height="18" rx="3" /><path d="M10 12v20" /></svg></div>
                <div class="sright">
                  <div class="srlabel">Anschlussreihenfolge:</div>
                  <div class="order">
                    <svg class="ico orderI" viewBox="0 0 70 44"><path d="M2 8h18l6 18 2 18-12-12z" stroke="#999" /><path d="M16 2h9v22l5 12-6 8-9-24z" /><path d="M34 22h12M39 17l-5 5 5 5" /><rect x="48" y="14" width="20" height="16" fill="#fff" /><rect x="48" y="26" width="20" height="4" fill="#2c3742" /></svg>
                    <div class="ordval">8</div>
                    <div class="stepper"><b class="chev up" /><b class="chev down" /></div>
                  </div>
                  <button class="wbtn block">Blockwanddetails...</button>
                </div>
              </div>

              <label class="chk one"><i class="box on">✓</i>Endoberflächen: Mit angrenzenden Wänden überschreiben</label>
              <label class="chk two"><i class="box" />Texturen den Wandkanten zuordnen</label>

              <div class="texrow"><span>Eigene Texturausrichtung</span><button class="wbtn texbtn">Textur zurücksetzen</button></div>
              <div class="hr r1" />
              <div class="rowA">
                <span>Auswirkung auf Raumflächen:</span>
                <div class="wbtn selectA">Von Raumfläche und -volumen abz...<i class="updown"><b class="chev up w" /><b class="chev down w" /></i></div>
              </div>
              <div class="bar b3"><i class="tri r" /><svg class="ico s38" viewBox="0 0 40 40" v-html="S.struct" />Tragwerksanalyse-Parameter</div>
              <div class="bar"><i class="tri r" /><svg class="ico s38" viewBox="0 0 40 40" v-html="S.cls" />Klassifizierung und Eigenschaften</div>
              <div class="hr r2" />
              <div class="dlgfoot">
                <svg class="ico s52" viewBox="0 0 44 32"><path d="M8 4h34l-6 14H2zM6 20H2l-1 4h35l6-14M5 26l-4 5h35l6-14M12 7l-3 7h8l3-7zM24 7l-3 7M30 7l-3 7" /></svg>
                <button class="wbtn field w476"><svg class="ico s32" viewBox="0 0 40 40" v-html="I.eye" /><span class="ftext">10 Wand außen</span><b class="chev" /></button>
                <button class="wbtn act cancel">Abbrechen</button>
                <button class="act ok">OK</button>
              </div>
            </div>
            <div class="mark" />
          </div>
        </div>

        <div class="statusbar">
          <div class="seg nav">
            <svg class="ico s34" viewBox="0 0 40 40" v-html="SI.back" />
            <svg class="ico s34" viewBox="0 0 40 40" v-html="SI.fwd" />
            <svg class="ico s34" viewBox="0 0 40 40" v-html="SI.plus" />
          </div>
          <div v-for="(s, k) in status" :key="k" class="seg" :class="{ last: k === status.length - 1 }">
            <svg class="ico s34" viewBox="0 0 40 40" v-html="s.i === 'houses' ? I.houses : SI[s.i]" />
            <span class="segt" :class="{ mid: s.c }">{{ s.t }}</span>
            <b class="chev" />
          </div>
        </div>
      </div>

      <aside class="side">
        <div class="handle h2" />
        <div class="stabs">
          <span class="gbtn st"><svg class="ico s40" viewBox="0 0 40 40" v-html="TI.tBtn1" /></span>
          <i class="vline" />
          <svg class="ico s40 st1" viewBox="0 0 40 40" v-html="TI.tBtn2" />
          <svg class="ico s40 st1" viewBox="0 0 40 40" v-html="TI.tBtn3" />
          <svg class="ico s40 st1" viewBox="0 0 40 40" v-html="TI.tBtn4" />
          <button class="wbtn menu"><svg class="ico s32" viewBox="0 0 40 40" v-html="TI.tMenu" /><b class="chev" /></button>
        </div>
        <div class="search"><svg class="ico s30" viewBox="0 0 40 40" v-html="TI.search" /><span>Projektmappe durchsuchen</span></div>
        <div class="treewrap">
          <div class="tree">
            <div v-for="r in tree" :key="r.t" class="trow" :class="['lv' + r.lv, { sel: r.sel }]">
              <span class="tw"><b v-if="r.tw" class="drop soft" /></span>
              <svg class="ico s38" viewBox="0 0 40 40" v-html="TI[r.i]" />
              <span>{{ r.t }}</span>
            </div>
          </div>
          <div class="vscroll"><i /></div>
        </div>
        <div class="hscroll"><i /></div>
        <div class="actions">
          <svg class="ico s34" viewBox="0 0 40 40" v-html="TI.add" />
          <svg class="ico s34" viewBox="0 0 40 40" v-html="TI.list" />
          <svg class="ico s34" viewBox="0 0 40 40" v-html="TI.del" />
        </div>
        <div class="sbar"><i class="tri d" />Beschreibungen</div>
        <div class="descr">
          <svg class="ico s30" viewBox="0 0 40 40" v-html="TI.plain" /><span class="dn">0.</span>
          <div class="tinput eg">EG</div>
        </div>
        <button class="wbtn einst">Einstellungen...</button>
        <div class="hr2" />
        <div class="handle h3" />
        <div class="ovr">
          <button class="wbtn w56"><svg class="ico s40" viewBox="0 0 40 40" v-html="TI.layerBtn" /></button>
          <div class="ovrfield"><svg class="ico s38 dimI" viewBox="0 0 40 40" v-html="I.floor" /><span>0. EG</span><b class="chev lite" /></div>
        </div>
        <div class="tools2">
          <svg class="ico s38" viewBox="0 0 40 40" v-html="TI.a" />
          <i class="fill" />
          <svg class="ico s38" viewBox="0 0 40 40" v-html="TI.b" />
          <svg class="ico s38" viewBox="0 0 40 40" v-html="TI.c" />
          <svg class="ico s38" viewBox="0 0 40 40" v-html="TI.d" />
          <svg class="ico s38" viewBox="0 0 40 40" v-html="TI.e" />
        </div>
        <div class="slabel">Transparentpause:</div>
        <div class="slide">
          <button class="sw"><i class="pink" /><b class="chev lite" /></button>
          <div class="slider"><i v-for="(_, k) in sliderTicks" :key="k" /><em /></div>
          <button class="sw nar"><b class="chev lite" /></button>
        </div>
        <div class="slabel">Aktiv:</div>
        <div class="slide">
          <button class="sw"><svg class="pie" viewBox="0 0 26 20"><ellipse cx="13" cy="10" rx="12" ry="9" fill="#8fc08a" /><path d="M13 10V1a12 9 0 0 1 12 9 10 9 0 0 1-1 4z" fill="#ef8f7f" /><path d="M13 10l11 4a12 9 0 0 1-22 0z" fill="#92b0ef" /><ellipse cx="13" cy="10" rx="12" ry="9" fill="none" stroke="#777" /></svg><b class="chev lite" /></button>
          <div class="slider"><i v-for="(_, k) in sliderTicks" :key="k" /><em /></div>
        </div>
        <div class="hr3" />
        <div class="tools3">
          <svg class="ico s38" viewBox="0 0 40 40" v-html="TI.f" />
          <svg class="ico s38" viewBox="0 0 40 40" v-html="TI.g" />
          <svg class="ico s38" viewBox="0 0 40 40" v-html="TI.h" />
          <svg class="ico s38" viewBox="0 0 40 40" v-html="TI.j" />
        </div>
      </aside>
    </main>

    <footer class="foot">
      <svg class="ico s40" viewBox="0 0 40 40" v-html="TI.win" />
      <i class="fsep" />
      <span class="brand">GRAPHISOFT <em>ID</em></span>
    </footer>
  </div>
</template>

<style>
body {
  margin: 0;
  background: #fff;
  width: 3090px;
  height: 1742px;
  overflow: hidden;
}
</style>

<style scoped>
.win {
  position: relative;
  margin: 52px 0 0 68px;
  width: 2954px;
  height: 1606px;
  display: flex;
  flex-direction: column;
  background: #ececec;
  border-radius: 24px;
  overflow: hidden;
  box-shadow: 0 0 0 1px #bdbdbd, 0 24px 60px rgba(0, 0, 0, 0.28), 0 0 44px rgba(0, 0, 0, 0.1);
  font-family: Inter, 'Liberation Sans', sans-serif;
  font-size: 22px;
  color: #22272c;
}
button {
  font: inherit;
  color: inherit;
  border: 0;
  padding: 0;
}
.ico {
  display: block;
  flex: none;
  width: 40px;
  height: 40px;
  fill: none;
  stroke: #2c3742;
  stroke-width: 2.2;
}
.s30 { width: 30px; height: 30px; }
.s32 { width: 32px; height: 32px; }
.s34 { width: 34px; height: 34px; }
.s36 { width: 36px; height: 36px; }
.s38 { width: 38px; height: 38px; }
.s40 { width: 40px; height: 40px; }
.s42 { width: 42px; height: 42px; }
.s44 { width: 44px; height: 44px; }
.s52 { width: 52px; height: 40px; }
.s60 { width: 64px; height: 60px; }
.chain { width: 24px; height: 52px; stroke-width: 1.8; }
.dimI { stroke: #a5a5a5; }
.chev {
  display: block;
  flex: none;
  width: 8px;
  height: 8px;
  border-top: 3px solid #2c3742;
  border-right: 3px solid #2c3742;
  transform: rotate(45deg);
}
.chev.lite { border-color: #a8a8a8; }
.chev.up { transform: rotate(-45deg); }
.chev.down { transform: rotate(135deg); }
.chev.w { border-color: #fff; }
.drop {
  display: block;
  width: 9px;
  height: 9px;
  margin-top: -5px;
  border-right: 3px solid #2c3742;
  border-bottom: 3px solid #2c3742;
  transform: rotate(45deg);
}
.drop.soft { border-color: #8f9498; }
.tri { display: block; flex: none; width: 0; height: 0; }
.tri.r { border-left: 14px solid #95989b; border-top: 9px solid transparent; border-bottom: 9px solid transparent; }
.tri.d { border-top: 14px solid #95989b; border-left: 9px solid transparent; border-right: 9px solid transparent; }

.titlebar {
  position: relative;
  flex: none;
  height: 56px;
  display: flex;
  align-items: center;
  justify-content: center;
  background: #e6e6e5;
  border-bottom: 2px solid #c9c9c9;
  box-sizing: border-box;
}
.lights {
  position: absolute;
  left: 16px;
  top: 16px;
  display: flex;
  gap: 16px;
}
.lights i {
  width: 24px;
  height: 24px;
  border-radius: 50%;
  background: #cfcfcd;
  box-shadow: inset 0 0 0 1px #bdbdbb;
}
.lights i.green { background: #62c554; box-shadow: none; }
.wtitle {
  display: flex;
  align-items: center;
  gap: 12px;
  margin-left: -4px;
  font-size: 26px;
  font-weight: 600;
  color: #ababab;
}
.doc { width: 24px; height: 30px; fill: #f4f4f4; stroke: #cfcfcf; stroke-width: 1.4; }

.toolbar {
  flex: none;
  height: 72px;
  display: flex;
  align-items: center;
  overflow: hidden;
  background: #ececec;
  border-bottom: 3px solid #e4e4e4;
  box-sizing: border-box;
}
.tsep {
  flex: none;
  width: 22px;
  height: 44px;
  background: linear-gradient(#d2d2d2, #d2d2d2) center / 2px 100% no-repeat;
}
.tsep:first-child { width: 20px; }
.tcell {
  flex: none;
  width: 60px;
  height: 57px;
  display: flex;
  align-items: center;
  justify-content: center;
  position: relative;
}
.tcell.on::before {
  content: '';
  position: absolute;
  inset: 0 3px;
  background: #bcbcc0;
  border-radius: 12px;
  box-shadow: 0 1px 2px rgba(0, 0, 0, 0.2);
}
.tcell .ico { position: relative; }
.tdrop {
  flex: none;
  width: 30px;
  height: 57px;
  display: flex;
  align-items: center;
  justify-content: center;
  position: relative;
}
.tdrop.on::before {
  content: '';
  position: absolute;
  inset: 0 2px;
  background: #bcbcc0;
  border-radius: 10px;
  box-shadow: 0 1px 2px rgba(0, 0, 0, 0.2);
}
.tdrop .drop { position: relative; }

.infobox {
  flex: none;
  height: 123px;
  display: flex;
  background: #ececec;
  border-bottom: 3px solid #e4e4e4;
  box-sizing: border-box;
}
.panel {
  flex: none;
  box-sizing: border-box;
  height: 120px;
  border-right: 2px solid #d8d8d8;
  padding-left: 10px;
  overflow: hidden;
}
.p0 { width: 378px; padding-left: 8px; }
.p1 { width: 371px; }
.p2 { width: 371px; }
.p3 { width: 371px; padding-left: 10px; }
.p4 { width: 369px; padding-left: 10px; }
.p5 { width: 370px; }
.p6 { width: 370px; padding-left: 9px; }
.p7 { width: 355px; border-right: 0; padding-left: 9px; }
.plabel {
  height: 38px;
  line-height: 38px;
  font-size: 18.5px;
  color: #2c3136;
}
.plabel.first { margin-left: 10px; }
.prow {
  height: 57px;
  margin-top: 11px;
  display: flex;
  align-items: center;
  gap: 5px;
}
.prow.top { align-items: flex-start; gap: 0; }
.hsep { flex: none; width: 2px; height: 47px; margin-top: -8px; background: #cfcfcf; }
.hcol { margin: -9px 0 0 8px; width: 254px; }
.small { height: 22px; line-height: 22px; font-size: 18.5px; }
.hbtns { display: flex; gap: 5px; margin: 8px 0 0 2px; }
.wbtn {
  display: flex;
  align-items: center;
  justify-content: center;
  box-sizing: border-box;
  background: #fff;
  border-radius: 11px;
  box-shadow: 0 1px 2px rgba(0, 0, 0, 0.3);
}
.gbtn {
  display: flex;
  align-items: center;
  justify-content: center;
  background: #bcbcc0;
  border-radius: 11px;
  box-shadow: 0 1px 2px rgba(0, 0, 0, 0.2);
}
.hbtns .wbtn { width: 79px; height: 37px; gap: 6px; }
.hbtns .gbtn { width: 79px; height: 37px; }
.b76 { flex: none; width: 76px; height: 57px; margin-left: 1px; }
.nub { flex: none; width: 16px; height: 57px; margin-left: 4px; }
.field { height: 57px; padding: 0 14px 0 18px; justify-content: flex-start; }
.ftext { flex: 1; margin-left: 6px; text-align: left; white-space: nowrap; }
.w348 { width: 348px; }
.g84 { width: 84px; height: 57px; gap: 2px; }
.plain { display: flex; align-items: center; gap: 4px; width: 68px; }
.m1 { width: 80px; margin-left: 16px; }
.g3 { margin-left: 10px; }
.g4 { margin-left: 14px; }
.w259 { width: 259px; }
.tight { padding: 0 14px 0 6px; }
.tight2 { padding: 0 12px 0 20px; }
.tight .ftext, .tight2 .ftext { margin-left: 8px; }
.tight2 .ftext { margin-left: 6px; font-size: 21.5px; }
.w84 { width: 84px; height: 57px; gap: 6px; }
.w260 { width: 260px; }
.thick { margin: 0 0 0 20px; }
.tinput {
  box-sizing: border-box;
  height: 33px;
  line-height: 31px;
  padding-left: 10px;
  background: #fff;
  box-shadow: 0 1px 1px rgba(0, 0, 0, 0.3);
  font-size: 22px;
}
.tinput.off { background: #f5f5f5; color: #b5b5b5; }
.w260i { width: 260px; margin-left: 20px; }
.hk { align-items: flex-start; }
.hk .ico { margin: 8px 16px 0 2px; }
.hinputs { margin-top: -7px; width: 220px; display: flex; flex-direction: column; gap: 9px; }
.nub2 { width: 26px; height: 27px; margin: 16px 0 0 9px; }
.vrow { display: flex; align-items: center; height: 41px; margin-left: 17px; }
.vrow:nth-child(2) { margin-top: -2px; }
.vtext { margin-left: 23px; white-space: nowrap; width: 235px; font-size: 21.5px; }
.nub3 { width: 22px; height: 28px; flex: none; border-radius: 10px 0 0 10px; }

.main { flex: 1; min-height: 0; display: flex; }
.palette { flex: none; width: 314px; box-sizing: border-box; padding-right: 4px; }
.handle { width: 118px; height: 2px; margin: 10px auto 4px; background: #b4b4b4; }
.prow2 {
  height: 56px;
  display: flex;
  align-items: center;
  gap: 18px;
  padding-left: 19px;
  white-space: nowrap;
}
.prow2.active { height: 54px; background: #bcbcc0; border-radius: 12px; }
.prow2.marq { margin-bottom: 3px; }
.pi {
  flex: none;
  width: 56px;
  height: 44px;
  fill: none;
  stroke: #2c3742;
  stroke-width: 2;
}
.psec {
  height: 39px;
  margin-bottom: 3px;
  display: flex;
  align-items: center;
  gap: 19px;
  padding-left: 13px;
  background: #d4d4d4;
  border-radius: 6px;
  color: #3a3f44;
}
.psec .tri.d { margin-right: -4px; }

.center { flex: none; width: 2271px; display: flex; flex-direction: column; }
.tabs { flex: none; height: 45px; display: flex; padding-top: 2px; box-sizing: border-box; }
.tabgrid { flex: none; width: 66px; display: flex; align-items: center; justify-content: center; }
.tab {
  flex: none;
  width: 599px;
  display: flex;
  align-items: center;
  justify-content: center;
  gap: 6px;
  background: #fff;
}
.tabfill { flex: 1; background: #e0e0e0; }
.tabnav {
  flex: none;
  width: 100px;
  display: flex;
  align-items: center;
  gap: 14px;
  padding-left: 14px;
  box-sizing: border-box;
  background: #f4f4f4;
}
.canvas {
  position: relative;
  flex: 1;
  min-height: 0;
  overflow: hidden;
  background-color: #fff;
  background-image: linear-gradient(to right, #dadada 2px, transparent 2px), linear-gradient(to bottom, #dadada 2px, transparent 2px);
  background-size: 131px 131px;
  background-position: 91px 94px;
}
.plan { position: absolute; left: 0; top: 0; width: 2271px; height: 1224px; }
.ar { font-family: 'Liberation Sans', Arial, sans-serif; fill: #000; }
.bold { font-weight: 700; }
.edge { position: absolute; background: #f1f1f1; }
.edge i { position: absolute; }
.e-top { left: 1104px; top: 2px; width: 64px; height: 30px; }
.e-bottom { left: 1104px; top: 1192px; width: 64px; height: 30px; }
.e-top i, .e-bottom i { left: 6px; right: 6px; top: 15px; height: 2px; background: repeating-linear-gradient(to right, #f2a95e 0 8px, transparent 8px 12px); }
.e-left { left: 2px; top: 582px; width: 32px; height: 60px; }
.e-right { right: 2px; top: 582px; width: 32px; height: 60px; }
.e-left i, .e-right i { top: 4px; bottom: 4px; left: 15px; width: 2px; background: repeating-linear-gradient(to bottom, #f2a95e 0 8px, transparent 8px 12px); }
.e-left i { background: repeating-linear-gradient(to bottom, #ccc 0 8px, transparent 8px 12px); }

.statusbar { flex: none; height: 36px; display: flex; background: #ececec; }
.seg {
  flex: none;
  width: 194px;
  box-sizing: border-box;
  border-right: 2px solid #dcdcdc;
  display: flex;
  align-items: center;
  padding: 0 16px 0 10px;
  white-space: nowrap;
}
.seg.nav { width: 143px; gap: 12px; padding: 0 0 0 5px; }
.seg.last { width: 187px; border-right: 0; }
.segt { flex: 1; margin-left: 19px; font-size: 21.5px; overflow: hidden; }
.segt.mid { margin-left: 8px; text-align: center; }

.dlg {
  position: absolute;
  left: 1161px;
  top: 41px;
  width: 1020px;
  height: 1045px;
  background: #ececec;
  border-radius: 20px;
  box-shadow: 0 26px 70px rgba(0, 0, 0, 0.42), 0 0 3px rgba(0, 0, 0, 0.35);
}
.dlg-title {
  position: relative;
  height: 57px;
  display: flex;
  align-items: center;
  justify-content: center;
  background: #f0efee;
  border-bottom: 2px solid #cfcfcf;
  border-radius: 20px 20px 0 0;
  box-sizing: border-box;
  font-size: 26.5px;
  font-weight: 600;
  color: #3a3d40;
}
.small2 { top: 16px; }
.dlg-body { padding: 21px 30px 0; }
.favrow { display: flex; align-items: center; justify-content: space-between; height: 46px; padding-left: 2px; }
.fav { width: 76px; height: 46px; gap: 4px; border-radius: 8px; }
.bar {
  display: flex;
  align-items: center;
  height: 44px;
  margin-top: 10px;
  padding-left: 12px;
  background: #d4d4d4;
  border-radius: 6px;
  font-weight: 600;
  letter-spacing: 0.3px;
  color: #2d3136;
}
.bar.first { margin-top: 22px; }
.bar .tri { margin-right: 14px; }
.bar .tri.d { margin-right: 10px; }
.bar .ico { margin-right: 14px; }
.bar.off { color: #a4a4a4; }
.bar.off .ico { stroke: #a4a4a4; }
.bar.off .tri { opacity: 0.55; }
.lbl { height: 28px; line-height: 28px; margin-top: 15px; }
.surf { margin-top: 9px; height: 167px; display: flex; }
.surf-rows { width: 497px; padding-left: 2px; display: flex; flex-direction: column; gap: 3.5px; }
.srow { display: flex; gap: 13px; height: 53px; }
.sbtn { width: 60px; height: 53px; }
.sbtn .ico { width: 44px; height: 48px; stroke-width: 2; }
.sfield {
  flex: none;
  width: 422px;
  box-sizing: border-box;
  padding: 0 22px 0 17px;
  display: flex;
  align-items: center;
  font-size: 21px;
  color: #b0b0b0;
  background: #f5f5f5;
  border-radius: 11px;
  box-shadow: 0 1px 2px rgba(0, 0, 0, 0.18);
}
.swatch { width: 23px; height: 23px; border: 2px solid #a0a0a0; box-sizing: border-box; background: #f5f5f5; margin-right: 3px; }
.sfield .chev { margin-left: auto; border-width: 2px 2px 0 0; }
.slink {
  flex: none;
  width: 47px;
  margin-left: 22px;
  display: flex;
  align-items: center;
  justify-content: center;
  background: #efefef;
  border-radius: 11px;
  box-shadow: 0 1px 2px rgba(0, 0, 0, 0.15);
}
.sright { flex: 1; margin-left: 34px; padding-left: 28px; border-left: 2px solid #d2d2d2; }
.srlabel { height: 46px; line-height: 46px; }
.order { height: 41px; margin-top: 6px; display: flex; align-items: center; justify-content: flex-end; gap: 8px; }
.orderI { width: 72px; height: 44px; stroke-width: 1.8; }
.ordval { width: 52px; height: 41px; line-height: 41px; padding-left: 7px; box-sizing: border-box; background: #fff; box-shadow: 0 1px 1px rgba(0, 0, 0, 0.25); }
.stepper {
  width: 25px;
  height: 42px;
  margin: 0 5px 0 5px;
  display: flex;
  flex-direction: column;
  align-items: center;
  justify-content: center;
  gap: 10px;
  background: #fff;
  border-radius: 10px;
  box-shadow: 0 1px 2px rgba(0, 0, 0, 0.3);
}
.stepper .chev { margin: 0; }
.block { width: 330px; height: 40px; margin-top: 32px; }
.chk { display: flex; align-items: center; gap: 9px; height: 24px; }
.chk.one { margin-top: 23px; }
.chk.two { margin-top: 26px; }
.box {
  flex: none;
  width: 23px;
  height: 24px;
  box-sizing: border-box;
  background: #fff;
  border-radius: 5px;
  box-shadow: 0 1px 2px rgba(0, 0, 0, 0.3);
  text-align: center;
  font-style: normal;
  font-weight: 700;
  font-size: 19px;
  line-height: 24px;
}
.box.on { background: #3b7ff5; color: #fff; }
.texrow { display: flex; align-items: center; justify-content: space-between; height: 43px; margin-top: 27px; color: #9c9c9c; padding-right: 2px; }
.texbtn { width: 326px; height: 43px; color: #b0b0b0; background: #f5f5f5; box-shadow: 0 1px 2px rgba(0, 0, 0, 0.14); }
.hr { height: 2px; background: #d2d2d2; }
.r1 { margin-top: 18px; }
.r2 { margin-top: 24px; }
.rowA { display: flex; align-items: center; justify-content: space-between; height: 40px; margin-top: 20px; padding-right: 3px; }
.selectA { width: 435px; height: 40px; justify-content: flex-start; padding-left: 18px; position: relative; font-size: 21.5px; white-space: nowrap; }
.updown {
  position: absolute;
  right: 3px;
  top: 4px;
  width: 32px;
  height: 32px;
  background: #3b7ff5;
  border-radius: 8px;
  display: flex;
  flex-direction: column;
  align-items: center;
  justify-content: center;
  gap: 6px;
}
.updown .chev { width: 7px; height: 7px; border-width: 2px 2px 0 0; }
.bar.b3 { margin-top: 15px; }
.dlgfoot { display: flex; align-items: center; height: 43px; margin-top: 22px; }
.dlgfoot .s52 { margin: 0 16px 0 3px; }
.w476 { width: 476px; height: 43px; padding: 0 12px 0 16px; }
.act { width: 179px; height: 40px; margin-top: 3px; }
.cancel { margin-left: 32px; }
.ok {
  margin-left: 22px;
  border-radius: 11px;
  color: #fff;
  font-weight: 500;
  background: linear-gradient(#4a8cf7, #2f72ee);
}
.mark {
  position: absolute;
  left: 17px;
  top: 766px;
  width: 983px;
  height: 68px;
  box-sizing: border-box;
  border: 6px solid #ee5cf0;
  filter: url(#rough);
}

.side { flex: none; width: 369px; box-sizing: border-box; padding: 0; overflow: hidden; }
.h2 { width: 140px; margin: 10px 0 8px 115px; }
.stabs { height: 57px; display: flex; align-items: center; padding-left: 7px; }
.st { width: 56px; height: 57px; flex: none; }
.vline { width: 2px; height: 32px; margin: 0 19px 0 14px; background: #d2d2d2; }
.stabs .st1 { margin-right: 20px; }
.menu { width: 66px; height: 42px; margin-left: 18px; gap: 2px; }
.search {
  box-sizing: border-box;
  width: 356px;
  height: 40px;
  margin: 14px 0 0 7px;
  padding-left: 12px;
  display: flex;
  align-items: center;
  gap: 12px;
  background: #fff;
  box-shadow: 0 1px 1px rgba(0, 0, 0, 0.25);
  color: #b5b5b5;
  overflow: hidden;
  white-space: nowrap;
}
.search span { width: 256px; overflow: hidden; }
.treewrap { height: 467px; margin: 8px 0 0 1px; display: flex; background: #f9f9f9; }
.tree { width: 338px; height: 467px; overflow: hidden; background: #fff; border-right: 4px solid #ededed; box-sizing: content-box; }
.trow { height: 48px; display: flex; align-items: center; white-space: nowrap; }
.trow .ico { width: 38px; height: 38px; margin-right: 7px; stroke-width: 1.8; }
.tw { flex: none; width: 30px; display: flex; align-items: center; justify-content: flex-start; padding-left: 10px; box-sizing: border-box; }
.lv0 { padding-left: 8px; }
.lv1 { padding-left: 36px; }
.lv2 { padding-left: 64px; }
.sel { background: #d9d9d9; font-weight: 700; }
.vscroll { flex: 1; position: relative; }
.vscroll i { position: absolute; left: 3px; top: 6px; width: 16px; height: 60px; border-radius: 8px; background: #bcbcbc; }
.hscroll { height: 27px; margin-left: 1px; background: #f9f9f9; position: relative; }
.hscroll i { position: absolute; left: 6px; top: 7px; width: 147px; height: 16px; border-radius: 8px; background: #bcbcbc; }
.actions { height: 70px; display: flex; align-items: center; gap: 26px; padding-left: 19px; }
.sbar {
  width: 360px;
  height: 43px;
  margin-left: 5px;
  display: flex;
  align-items: center;
  gap: 17px;
  padding-left: 12px;
  box-sizing: border-box;
  background: #d4d4d4;
  border-radius: 8px;
  color: #2d3136;
}
.descr { display: flex; align-items: center; height: 33px; margin-top: 13px; padding-left: 6px; }
.dn { margin-left: 9px; width: 83px; }
.eg { width: 234px; line-height: 33px; padding-left: 7px; }
.einst { width: 360px; height: 39px; margin: 7px 0 0 5px; }
.hr2 { height: 2px; margin-top: 8px; background: #e4e4e4; }
.h3 { width: 140px; margin: 9px 0 7px 115px; }
.ovr { display: flex; gap: 4px; height: 57px; padding-left: 7px; }
.w56 { width: 56px; height: 57px; }
.ovrfield {
  width: 296px;
  display: flex;
  align-items: center;
  gap: 8px;
  padding: 0 11px 0 6px;
  box-sizing: border-box;
  color: #b0b0b0;
  background: #f5f5f5;
  border-radius: 11px;
  box-shadow: 0 1px 2px rgba(0, 0, 0, 0.15);
}
.ovrfield .chev { margin-left: auto; }
.tools2 {
  height: 79px;
  display: flex;
  align-items: center;
  gap: 21px;
  padding: 0 16px 0 16px;
  border-bottom: 2px solid #d6d6d6;
  box-sizing: border-box;
}
.fill { flex: 1; }
.slabel { height: 49px; display: flex; align-items: center; padding: 2px 0 0 6px; color: #8a8a8a; box-sizing: border-box; }
.slide { height: 57px; display: flex; padding-left: 7px; gap: 8px; }
.sw {
  flex: none;
  width: 56px;
  height: 57px;
  display: flex;
  align-items: center;
  justify-content: center;
  gap: 7px;
  background: #f4f4f4;
  border-radius: 11px;
  box-shadow: 0 1px 2px rgba(0, 0, 0, 0.15);
}
.sw.nar { width: 26px; }
.pink { width: 24px; height: 17px; background: #f0988e; }
.pie { width: 26px; height: 20px; }
.slider {
  position: relative;
  width: 260px;
  height: 6px;
  margin-top: 20px;
  display: flex;
  justify-content: space-between;
  padding-right: 28px;
  box-sizing: border-box;
  background: #e2e2e2;
}
.slider i { width: 4px; height: 12px; margin-top: -3px; background: #dcdcdc; }
.slider em { position: absolute; right: 0; top: -13px; width: 16px; height: 32px; border-radius: 8px; background: #f4f4f4; box-shadow: 0 1px 2px rgba(0, 0, 0, 0.2); }
.hr3 { height: 2px; margin-top: 15px; background: #d6d6d6; }
.tools3 { height: 72px; display: flex; align-items: center; gap: 22px; padding-left: 78px; }

.foot {
  flex: none;
  height: 50px;
  display: flex;
  align-items: center;
  justify-content: flex-end;
  padding-right: 24px;
  border-top: 2px solid #e6e6e6;
  box-sizing: border-box;
  background: #ececec;
}
.fsep { width: 2px; height: 30px; margin: 0 22px 0 17px; background: #bdbdbd; }
.brand { font-size: 25.5px; font-weight: 500; color: #2c3742; white-space: nowrap; }
.brand em { font-style: normal; font-weight: 300; }
</style>
